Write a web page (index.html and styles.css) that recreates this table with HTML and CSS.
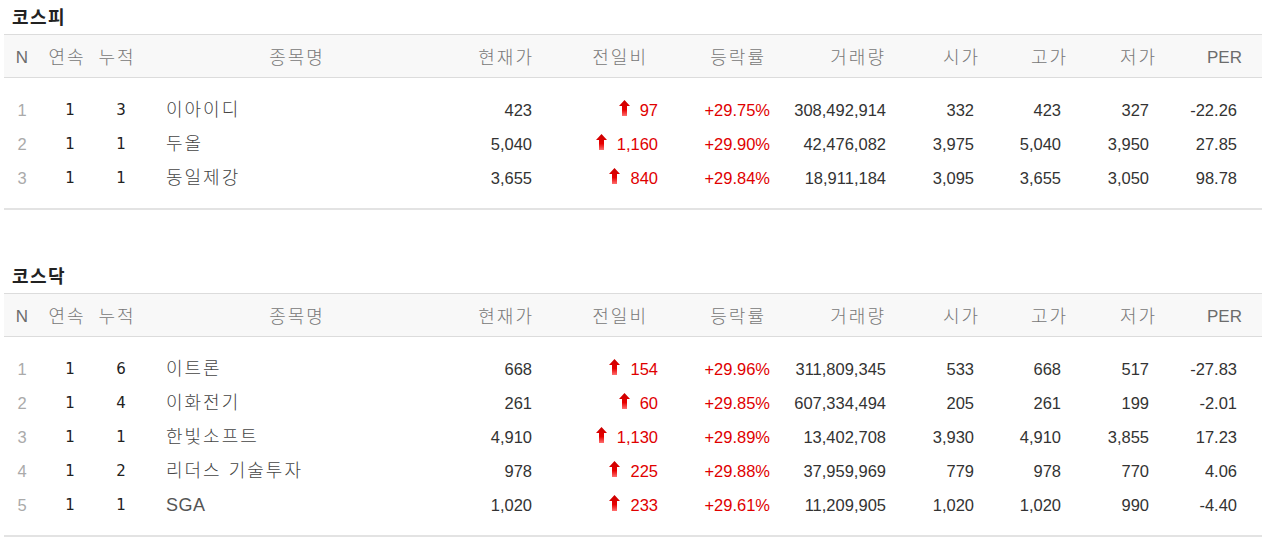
FILE: index.html
```html
<!DOCTYPE html>
<html lang="ko">
<head>
<meta charset="utf-8">
<link rel="stylesheet" href="styles.css">
</head>
<body>
<svg width="0" height="0" class="defs">
  <defs>
    <linearGradient id="ag" x1="0" y1="0" x2="0" y2="1">
      <stop offset="0" stop-color="#c80000"/>
      <stop offset="0.6" stop-color="#e80000"/>
      <stop offset="1" stop-color="#ff7070"/>
    </linearGradient>
  </defs>
</svg>

<section class="market">
  <h2 class="title">코스피</h2>
  <div class="table">
    <div class="row head">
      <div class="c n">N</div><div class="c s">연속</div><div class="c a">누적</div><div class="c name">종목명</div>
      <div class="c p">현재가</div><div class="c d">전일비</div><div class="c r">등락률</div><div class="c v">거래량</div>
      <div class="c o">시가</div><div class="c h">고가</div><div class="c l">저가</div><div class="c per">PER</div>
    </div>
    <div class="body">
      <div class="row">
        <div class="c n">1</div><div class="c s">1</div><div class="c a">3</div><div class="c name">이아이디</div>
        <div class="c p">423</div><div class="c d up"><svg class="arrow" viewBox="0 0 11 16"><polygon points="5.5,0 11,6 8,6 8,16 3,16 3,6 0,6" fill="url(#ag)"/></svg>97</div><div class="c r up">+29.75%</div><div class="c v">308,492,914</div>
        <div class="c o">332</div><div class="c h">423</div><div class="c l">327</div><div class="c per">-22.26</div>
      </div>
      <div class="row">
        <div class="c n">2</div><div class="c s">1</div><div class="c a">1</div><div class="c name">두올</div>
        <div class="c p">5,040</div><div class="c d up"><svg class="arrow" viewBox="0 0 11 16"><polygon points="5.5,0 11,6 8,6 8,16 3,16 3,6 0,6" fill="url(#ag)"/></svg>1,160</div><div class="c r up">+29.90%</div><div class="c v">42,476,082</div>
        <div class="c o">3,975</div><div class="c h">5,040</div><div class="c l">3,950</div><div class="c per">27.85</div>
      </div>
      <div class="row">
        <div class="c n">3</div><div class="c s">1</div><div class="c a">1</div><div class="c name">동일제강</div>
        <div class="c p">3,655</div><div class="c d up"><svg class="arrow" viewBox="0 0 11 16"><polygon points="5.5,0 11,6 8,6 8,16 3,16 3,6 0,6" fill="url(#ag)"/></svg>840</div><div class="c r up">+29.84%</div><div class="c v">18,911,184</div>
        <div class="c o">3,095</div><div class="c h">3,655</div><div class="c l">3,050</div><div class="c per">98.78</div>
      </div>
    </div>
  </div>
</section>

<section class="market second">
  <h2 class="title">코스닥</h2>
  <div class="table">
    <div class="row head">
      <div class="c n">N</div><div class="c s">연속</div><div class="c a">누적</div><div class="c name">종목명</div>
      <div class="c p">현재가</div><div class="c d">전일비</div><div class="c r">등락률</div><div class="c v">거래량</div>
      <div class="c o">시가</div><div class="c h">고가</div><div class="c l">저가</div><div class="c per">PER</div>
    </div>
    <div class="body">
      <div class="row">
        <div class="c n">1</div><div class="c s">1</div><div class="c a">6</div><div class="c name">이트론</div>
        <div class="c p">668</div><div class="c d up"><svg class="arrow" viewBox="0 0 11 16"><polygon points="5.5,0 11,6 8,6 8,16 3,16 3,6 0,6" fill="url(#ag)"/></svg>154</div><div class="c r up">+29.96%</div><div class="c v">311,809,345</div>
        <div class="c o">533</div><div class="c h">668</div><div class="c l">517</div><div class="c per">-27.83</div>
      </div>
      <div class="row">
        <div class="c n">2</div><div class="c s">1</div><div class="c a">4</div><div class="c name">이화전기</div>
        <div class="c p">261</div><div class="c d up"><svg class="arrow" viewBox="0 0 11 16"><polygon points="5.5,0 11,6 8,6 8,16 3,16 3,6 0,6" fill="url(#ag)"/></svg>60</div><div class="c r up">+29.85%</div><div class="c v">607,334,494</div>
        <div class="c o">205</div><div class="c h">261</div><div class="c l">199</div><div class="c per">-2.01</div>
      </div>
      <div class="row">
        <div class="c n">3</div><div class="c s">1</div><div class="c a">1</div><div class="c name">한빛소프트</div>
        <div class="c p">4,910</div><div class="c d up"><svg class="arrow" viewBox="0 0 11 16"><polygon points="5.5,0 11,6 8,6 8,16 3,16 3,6 0,6" fill="url(#ag)"/></svg>1,130</div><div class="c r up">+29.89%</div><div class="c v">13,402,708</div>
        <div class="c o">3,930</div><div class="c h">4,910</div><div class="c l">3,855</div><div class="c per">17.23</div>
      </div>
      <div class="row">
        <div class="c n">4</div><div class="c s">1</div><div class="c a">2</div><div class="c name">리더스 기술투자</div>
        <div class="c p">978</div><div class="c d up"><svg class="arrow" viewBox="0 0 11 16"><polygon points="5.5,0 11,6 8,6 8,16 3,16 3,6 0,6" fill="url(#ag)"/></svg>225</div><div class="c r up">+29.88%</div><div class="c v">37,959,969</div>
        <div class="c o">779</div><div class="c h">978</div><div class="c l">770</div><div class="c per">4.06</div>
      </div>
      <div class="row">
        <div class="c n">5</div><div class="c s">1</div><div class="c a">1</div><div class="c name en">SGA</div>
        <div class="c p">1,020</div><div class="c d up"><svg class="arrow" viewBox="0 0 11 16"><polygon points="5.5,0 11,6 8,6 8,16 3,16 3,6 0,6" fill="url(#ag)"/></svg>233</div><div class="c r up">+29.61%</div><div class="c v">11,209,905</div>
        <div class="c o">1,020</div><div class="c h">1,020</div><div class="c l">990</div><div class="c per">-4.40</div>
      </div>
    </div>
  </div>
</section>
</body>
</html>
```

FILE: styles.css
```css
html, body {
  margin: 0;
  padding: 0;
  background: #fff;
}
body {
  font-family: "Liberation Sans", "Noto Sans CJK KR", sans-serif;
  color: #333;
}
.defs {
  position: absolute;
  width: 0;
  height: 0;
}
.market {
  margin: 0 1px 0 4px;
}
.market.second {
  margin-top: 49px;
}
.title {
  margin: 0;
  height: 34px;
  line-height: 32px;
  padding-left: 8px;
  font-size: 18px;
  font-weight: 700;
  letter-spacing: 1.5px;
  color: #222;
  font-family: "Noto Sans CJK KR", sans-serif;
}
.table {
  border-top: 1px solid #dcdcdc;
  border-bottom: 2px solid #e3e3e3;
}
.row {
  display: grid;
  grid-template-columns: 36px 52px 48px 314px 78px 128px 112px 116px 92px 88px 89px 105px;
  height: 34px;
  align-items: center;
  font-size: 16.5px;
}
.row.head {
  height: 42px;
  background: #f8f8f8;
  border-bottom: 1px solid #dcdcdc;
  color: #777;
  font-family: "Noto Sans CJK KR", sans-serif;
  font-size: 18px;
  font-weight: 300;
  letter-spacing: 2px;
}
.head .per,
.head .n {
  font-family: "Liberation Sans", sans-serif;
  font-size: 17px;
  letter-spacing: 0;
  color: #6c6c6c;
  position: relative;
  top: 2px;
}
.body {
  padding: 15px 0 13px;
}
.c {
  white-space: nowrap;
  line-height: 20px;
}
.n { text-align: center; color: #aaa; }
.s, .a { text-align: center; }
.head .s { padding-left: 2px; }
.head .a { padding-left: 2px; }
.body .s { padding-left: 8px; color: #222; font-family: "DejaVu Sans", sans-serif; font-size: 15px; }
.body .a { padding-left: 10px; color: #222; font-family: "DejaVu Sans", sans-serif; font-size: 15px; }
.name { text-align: center; }
.body .name {
  text-align: left;
  padding-left: 26px;
  font-size: 18px;
  letter-spacing: 2px;
  color: #444;
  font-family: "Noto Sans CJK KR", sans-serif;
  font-weight: 300;
  position: relative;
  top: -2px;
}
.body .name.en {
  font-family: "Liberation Sans", sans-serif;
  font-size: 18px;
  letter-spacing: 0.5px;
  color: #555;
  top: 0;
}
.p, .d, .r, .v, .o, .h, .l, .per { text-align: right; }
.head .p { padding-right: 0; margin-right: -2px; }
.head .d { padding-right: 12px; }
.head .r { padding-right: 6px; }
.head .v { padding-right: 2px; }
.head .o, .head .h, .head .l { padding-right: 0; }
.head .per { padding-right: 20px; }
.body .d { padding-right: 2px; display: flex; justify-content: flex-end; align-items: center; }
.body .r { padding-right: 2px; }
.body .v { padding-right: 2px; }
.body .o { padding-right: 6px; }
.body .h { padding-right: 7px; }
.body .l { padding-right: 8px; }
.body .per { padding-right: 25px; }
.up { color: #e00000; }
.arrow {
  width: 11px;
  height: 16px;
  margin-right: 10px;
  margin-top: -4px;
  flex: none;
}
```
